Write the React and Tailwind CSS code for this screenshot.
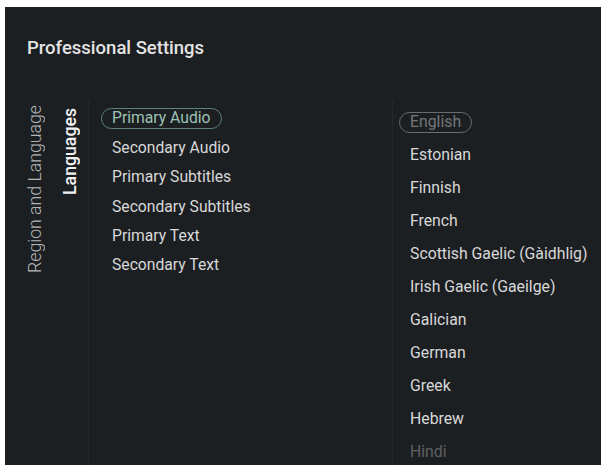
import React from "react";

const left = ["Primary Audio", "Secondary Audio", "Primary Subtitles", "Secondary Subtitles", "Primary Text", "Secondary Text"];
const right = ["English", "Estonian", "Finnish", "French", "Scottish Gaelic (Gàidhlig)", "Irish Gaelic (Gaeilge)", "Galician", "German", "Greek", "Hebrew", "Hindi"];

export default function App() {
  return (
    <div className="w-[601px] h-[465px] bg-white pl-[5px] pt-[7px] overflow-hidden" style={{ fontFamily: "Roboto, 'Noto Sans', sans-serif" }}>
      <div className="w-full h-full bg-[#1c1f22] flex flex-col">
        <div className="pl-[22px] pt-[30px] h-[51px] text-[18.5px] leading-[22px] font-medium text-[#e4e4e4] whitespace-nowrap">Professional Settings</div>
        <div className="flex flex-1 mt-[42px]">
          <div className="w-[52px] pl-[20px] pt-[5px] flex flex-col items-start">
            <div className="[writing-mode:vertical-rl] rotate-180 text-[17.7px] leading-[21px] font-light text-[#b4b4b4] whitespace-nowrap">Region and Language</div>
          </div>
          <div className="w-[32px] pl-[3px] pt-[8px] flex flex-col items-start border-r border-[#25292c]">
            <div className="[writing-mode:vertical-rl] rotate-180 text-[17.7px] leading-[21px] font-medium text-[#f0f0f0] whitespace-nowrap">Languages</div>
          </div>
          <div className="w-[304px] pl-[12px] pt-[3.5px] flex flex-col border-r border-[#25292c]">
            {left.map((t, i) => (
              <div key={t} className="h-[29.4px] flex items-center whitespace-nowrap">
                {i === 0 ? (
                  <span className="border border-[#5d8575] rounded-full px-[10px] h-[21px] flex items-center text-[15.7px] text-[#9ec2b3]">{t}</span>
                ) : (
                  <span className="pl-[11px] text-[15.7px] text-[#d8d8d8]">{t}</span>
                )}
              </div>
            ))}
          </div>
          <div className="flex-1 pl-[6px] pt-[5.5px] flex flex-col">
            {right.map((t, i) => (
              <div key={t} className="h-[33px] flex items-center whitespace-nowrap">
                {i === 0 ? (
                  <span className="border border-[#6a6d70] rounded-full px-[10px] h-[21px] flex items-center text-[15.8px] text-[#737679]">{t}</span>
                ) : (
                  <span className={"pl-[11px] text-[15.8px] " + (i === right.length - 1 ? "text-[#5e6164]" : "text-[#d8d8d8]")}>{t}</span>
                )}
              </div>
            ))}
          </div>
        </div>
      </div>
    </div>
  );
}
